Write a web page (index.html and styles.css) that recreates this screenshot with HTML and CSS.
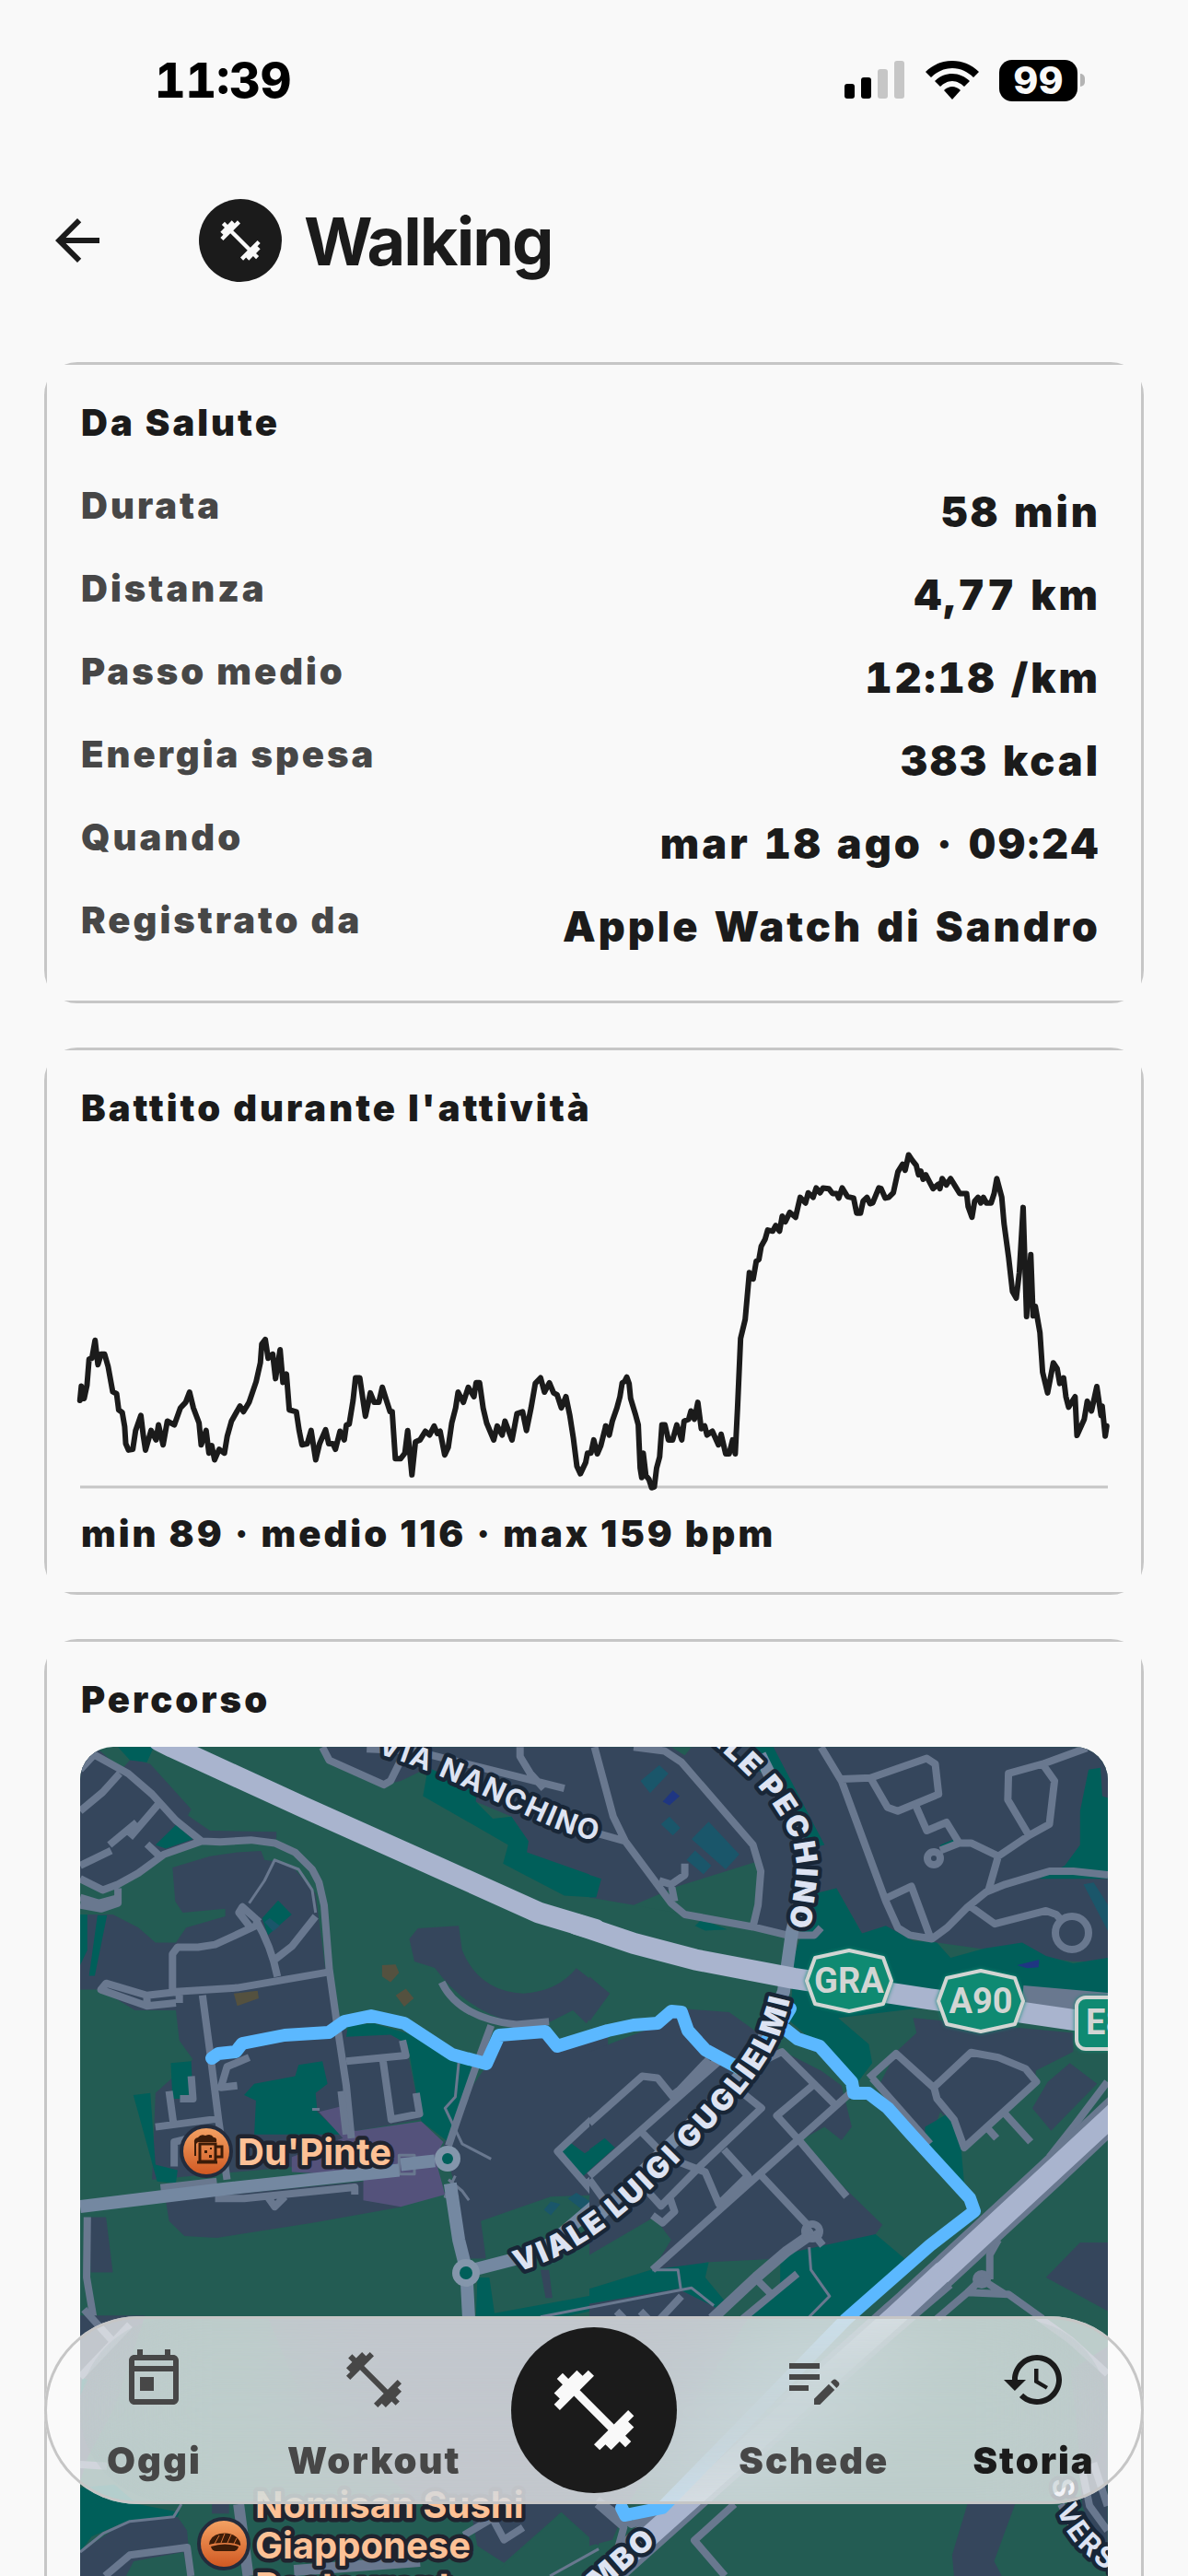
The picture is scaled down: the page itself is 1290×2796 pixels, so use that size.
FILE: index.html
```
<!DOCTYPE html>
<html lang="it">
<head>
    <meta charset="UTF-8">
    <meta name="viewport" content="width=device-width, initial-scale=1">
    <title>Walking</title>
    <link rel="stylesheet" href="styles.css">
</head>
<body>

    <!-- Shared icons -->
    <svg class="sprite" aria-hidden="true">
        <symbol id="dumbbell" viewBox="0 0 24 24">
            <path d="M20.57 14.86L22 13.43 20.57 12 17 15.57 8.43 7 12 3.43 10.57 2 9.14 3.43 7.71 2 5.57 4.14 4.14 2.71 2.71 4.14l1.43 1.43L2 7.71l1.43 1.43L2 10.57 3.43 12 7 8.43 15.57 17 12 20.57 13.43 22l1.43-1.43L16.29 22l2.14-2.14 1.43 1.43 1.43-1.43-1.43-1.43L22 16.29z"/>
        </symbol>
    </svg>

    <!-- Status bar -->
    <div class="status-bar">
        <span class="clock">11:39</span>
        <div class="status-icons">
            <svg class="signal" viewBox="0 0 66 42">
                <rect x="0" y="25" width="11" height="16" rx="3"/>
                <rect x="18" y="18" width="11" height="23" rx="3"/>
                <rect class="off" x="36" y="9" width="11" height="32" rx="3"/>
                <rect class="off" x="54" y="0" width="11" height="41" rx="3"/>
            </svg>
            <svg class="wifi" viewBox="0 0 58 42">
                <path d="M29 0C18 0 8 4 0 12l6 6c6-6 14-10 23-10s17 4 23 10l6-6C50 4 40 0 29 0z"/>
                <path d="M29 14c-7 0-14 3-19 8l6 6c3-3 8-6 13-6s10 3 13 6l6-6c-5-5-12-8-19-8z"/>
                <path d="M29 28c-3 0-7 2-9 4l9 10 9-10c-2-2-6-4-9-4z"/>
            </svg>
            <div class="battery"><span class="battery-level">99</span></div>
        </div>
    </div>

    <!-- Header -->
    <header class="header">
        <button class="back-btn" type="button" aria-label="Indietro">
            <svg viewBox="0 0 24 24"><path d="M20 11H7.83l5.59-5.59L12 4l-8 8 8 8 1.41-1.41L7.83 13H20v-2z"/></svg>
        </button>
        <span class="sport-icon"><svg><use href="#dumbbell"/></svg></span>
        <h1>Walking</h1>
    </header>

    <main class="content">
        <!-- Health data -->
        <section class="card">
            <div class="card-body">
                <h2>Da Salute</h2>
                <dl class="stats">
                    <div class="stat"><dt>Durata</dt><dd>58 min</dd></div>
                    <div class="stat"><dt>Distanza</dt><dd>4,77 km</dd></div>
                    <div class="stat"><dt>Passo medio</dt><dd>12:18 /km</dd></div>
                    <div class="stat"><dt>Energia spesa</dt><dd>383 kcal</dd></div>
                    <div class="stat"><dt>Quando</dt><dd>mar 18 ago · 09:24</dd></div>
                    <div class="stat"><dt>Registrato da</dt><dd>Apple Watch di Sandro</dd></div>
                </dl>
            </div>
        </section>

        <!-- Heart rate -->
        <section class="card">
            <div class="card-body">
                <h2>Battito durante l'attività</h2>
                <svg class="chart" viewBox="0 0 1116 360" preserveAspectRatio="none">
                    <line class="axis" x1="0" y1="360" x2="1116" y2="360"/>
                    <g transform="translate(-27 -134) scale(.3827 .4082)">
                        <polyline class="pulse" points="70,980 74,942 82,975 90,940 96,870 104,868 113,820 121,885 130,857 140,857 150,890 163,957 174,962 180,1005 190,1012 197,1050 200,1095 208,1112 220,1110 228,1060 243,1020 250,1075 256,1112 272,1060 286,1085 293,1045 306,1098 318,1035 338,1045 355,1000 370,985 381,958 392,1000 408,1040 414,1098 428,1060 436,1120 444,1100 452,1138 465,1110 480,1120 488,1075 500,1035 524,995 534,1010 550,985 570,930 582,880 586,830 596,818 604,868 617,857 625,922 638,845 646,932 656,910 664,1005 684,1010 692,1060 700,1098 715,1095 726,1060 739,1138 750,1095 767,1058 776,1095 788,1095 795,1110 808,1062 820,1085 826,1045 834,1043 845,980 852,920 864,920 880,1022 894,960 905,985 918,985 928,945 938,975 950,1010 956,1010 965,1135 980,1135 992,1120 1000,1060 1012,1178 1022,1090 1035,1085 1050,1062 1062,1072 1075,1048 1084,1068 1092,1062 1105,1125 1115,1105 1125,1040 1136,1000 1143,958 1158,985 1172,945 1188,970 1194,933 1204,933 1214,1000 1224,1040 1244,1085 1254,1048 1268,1072 1276,1035 1296,1085 1310,1015 1326,1010 1337,1060 1350,1000 1362,935 1377,920 1388,958 1402,933 1414,960 1424,965 1436,1000 1449,970 1460,1020 1470,1080 1480,1155 1490,1175 1505,1145 1510,1120 1520,1120 1528,1085 1538,1122 1548,1100 1562,1048"/>
                    </g>
                    <g transform="translate(553 -134) scale(.4146 .4082)">
                        <polyline class="pulse" points="43,1048 52,1072 60,1035 72,1000 80,970 86,933 92,930 98,918 104,935 108,975 120,1015 128,1045 133,1160 137,1185 141,1120 148,1180 156,1190 163,1212 170,1210 176,1160 184,1130 190,1045 198,1045 207,1085 218,1085 229,1045 242,1085 248,1035 260,1030 266,1008 275,1030 284,985 293,1055 302,1048 308,1072 322,1062 338,1098 345,1070 357,1122 366,1122 375,1085 382,1122 388,1000 396,815 408,765 419,640 429,657 437,610 444,605 450,570 460,552 467,527 480,530 488,515 498,530 505,490 513,505 525,480 540,493 552,440 566,455 573,428 586,440 594,415 604,428 612,415 627,417 637,430 648,430 653,442 662,415 676,438 692,442 700,482 710,482 717,450 727,440 735,457 742,455 758,415 764,417 775,442 784,440 796,428 808,372 820,352 827,368 836,327 846,342 856,355 862,380 868,370 874,392 881,380 900,417 914,405 918,417 924,390 935,407 946,390 958,410 970,430 988,430 992,465 1002,493 1009,450 1018,440 1025,455 1032,440 1040,455 1052,455 1060,430 1067,390 1080,440 1086,510 1098,600 1108,690 1118,708 1126,640 1136,467 1145,757 1156,592 1162,755 1168,730 1180,800 1187,905 1200,960 1215,880 1225,895 1232,935 1242,920 1248,970 1255,998 1272,970 1277,1073 1296,1030 1304,982 1315,1008 1329,943 1340,1020 1343,995 1351,1075 1355,1048"/>
                    </g>
                </svg>
                <p class="caption">min 89 · medio 116 · max 159 bpm</p>
            </div>
        </section>

        <!-- Route map -->
        <section class="card">
            <div class="card-body">
                <h2>Percorso</h2>
                <svg class="map" viewBox="0 0 1116 1116" preserveAspectRatio="xMidYMin slice">
                    <defs>
                        <linearGradient id="pin" x1="0" y1="0" x2="0" y2="1">
                            <stop offset="0" stop-color="#f5a465"/>
                            <stop offset="1" stop-color="#cf5620"/>
                        </linearGradient>
                        <path id="nanchino" d="M322 7 C380 24 430 50 487 76 S545 98 600 110"/>
                        <path id="pechino" d="M630 -50 C700 5 738 40 758 72 S780 125 776 150 S773 180 769 198"/>
                        <path id="guglielmi" d="M475 570 C532 552 577 523 636 464 S747 350 762 305 S774 250 777 220"/>
                        <path id="colombo" d="M450 1016 L628 862"/>
                        <path id="versi" d="M1056 795 C1058 850 1085 880 1150 915"/>
                    </defs>

                    <rect class="green" width="1116" height="1116"/>

                    <!-- north west -->
                    <g transform="translate(-7 -16) scale(.37 .4082)">
                        <path class="block" d="M19 40H65L140 100 380 290 270 325 140 405 85 420 19 395z M170 70L225 85 345 205 335 222 400 262 595 265 595 285 380 285 140 100z"/>
                        <path class="block" d="M290 360L400 330 480 320 550 316 560 340 600 345 640 355 710 430 740 640 775 790 950 805 980 850 1020 1030 830 1060 720 1150 230 1190 240 960 350 870 310 820 300 740 180 740 80 685 19 685 19 485 115 485 190 520 240 560 300 560 330 520 445 490 445 470 320 480 298 450z"/>
                        <path class="block" d="M730 40H1568V440H1530L1330 320 1285 225 1180 185 1040 95 960 130 910 140 750 75z M985 550L1010 522 1130 515 1140 580Q1190 690 1320 695 1420 690 1475 628L1535 670 1560 700 1505 775 1465 740 1400 770 1300 775Q1150 740 1060 627L1000 610z"/>
                        <path class="block" d="M1210 890L1270 790H1390L1420 840 1568 790V1230L1400 1235 1195 1300 1210 1400H1150L1130 1240 1085 1100 1140 980z M270 1245L850 1195 855 1245 965 1262 700 1305 420 1345 325 1340 280 1300z M45 1290H95L115 1437H50z M1370 1430h25l10 75h-20z"/>
                        <path class="park" d="M130 40H235L215 80 165 75z M240 300L300 247 350 285 270 310z M19 485H40V580L19 620z M70 487H98L62 648H45z M600 448L640 485 570 540 553 495z M530 935L650 915 660 885 730 875 745 935 710 960 715 1010 785 1070H530L535 980 500 965z M285 880L345 875 350 975H290z M175 965L225 960 240 1150 305 1165 300 1200 245 1195z M805 780L880 775 975 800 1040 830 1190 890 1100 1090 1020 1035 980 830 930 805 800 810z M1185 1450H1220L1235 1545 1568 1490V1530L1370 1568H1180z M1040 95L1185 150 1180 185 1230 230 1285 225 1335 290 1330 320 1550 390 1530 440 1440 435 1260 350 1275 300 1025 170z M1430 1110L1455 1090 1500 1120 1568 1080V1120L1490 1185z"/>
                        <path class="mall" d="M720 1010L785 995 800 1060 830 1060 1020 1035 1085 1090 1060 1130 1090 1230 960 1262 850 1245V1180L640 1170V1130L790 1080z"/>
                        <path class="court" d="M905 620L945 618 955 640 930 665 905 650z M945 700L975 682 998 708 970 730z M470 695L540 688 543 708 480 728z"/>
                        <path class="pool" d="M560 505L575 495 605 515 585 530z M1380 1270L1400 1248 1428 1255 1400 1285z M1450 1240L1475 1225 1520 1250 1500 1275z"/>
                        <path class="road" d="M60 60L160 110 230 165 300 235 375 290 430 292 520 287 590 295 650 320 700 365 720 400 735 460 750 630 775 790 800 940 815 1080 M375 290L265 325 190 375 130 405 85 420 19 390 M19 100L65 55 M135 110L85 160 19 210 M250 190L165 280 M185 240L105 300 M19 355L110 315 M215 298L255 332 M19 440L75 455 135 440 M130 415V455L80 470 19 460"/>
                        <path class="road" d="M290 690V590L305 572H365L415 565 535 515 M545 505L495 465 485 480 515 515 M535 500Q580 570 598 650 M710 490L640 570 590 605 M300 690L480 680 750 638 M300 720L215 728 80 685 95 668 215 700 310 690V720 M215 700V728 M378 700L400 850 425 1030 450 1190 M240 1050L425 1028 M280 955L292 1035 M345 915L350 975H312 M515 865L450 890 432 945 480 940 M800 875L975 860 965 820 M908 875L932 1030 1015 1015 1005 960 M785 955L800 1070"/>
                        <path class="road" d="M730 40L750 75 910 140 930 130 960 75 M860 45L1000 50 1440 150 M1310 40V65L1340 110 1380 150 M1530 40L1568 200 M1540 270L1568 280 M1225 780L1180 890 1130 1020 1100 1100 M1080 665Q1130 760 1300 778L1395 770 M295 1155V1090L340 1080 M255 1212L420 1195 M415 1240H500L825 1210V1230 M565 1230L590 1262 620 1235 M40 1290L38 1450 60 1568 M1568 990L1420 1115 1568 1270 M1510 1185L1560 1240"/>
                        <path class="road thin" d="M515 455L560 395 590 340 660 365 700 420 710 480 M1130 880L1120 970 1090 1000 1140 1095 1225 1135 M955 1125h45v50h-45z M1100 1190L1140 1220 1160 1245 M1120 1180L1090 1235H1130 M1370 1555L1568 1520 M700 1003H722"/>
                        <path class="avenue" d="M19 1262L440 1215 955 1165 M960 1150L1060 1140 M1105 1200L1130 1350 1152 1430 1160 1568 M1150 1435L1300 1400 1400 1360 1568 1230"/>
                        <path class="motorway" d="M250 22L290 40 675 200 1070 360 1365 480 1530 525"/>
                    </g>

                    <!-- north east -->
                    <g transform="translate(553 -16) scale(.37 .4082)">
                        <path class="block" d="M0 40H1522V610H1420L1020 560 950 550 800 535 725 415 660 430 590 540 480 515 280 485 240 455 130 460 0 440z"/>
                        <path class="green" d="M130 460L260 410 490 345 500 370 480 510 280 485z M240 40H300L280 62z"/>
                        <path class="park" d="M480 40H540L690 300 640 310Q600 170 480 90z M660 430L725 415 800 535 870 515 950 555 1020 560 1060 600 1160 575 1270 560 1340 595 1420 615 1522 600V740L960 735 730 760 820 830 830 880 780 940 680 840 590 770 600 600z M1465 100L1500 95 1505 170 1522 175V390H1320L1395 355 1440 300V210z M0 380L35 390 20 440H0z M310 515L330 498 405 525 340 528z"/>
                        <path class="block" d="M0 850L200 780 270 735 410 745 480 790 560 845 680 900 740 940 770 1050 740 1085 690 1050 620 1085 690 1160 860 1310 820 1360 720 1375 560 1400 340 1410V1450L380 1560 0 1568z M0 650L60 695 0 770z"/>
                        <path class="block" d="M900 850L960 800 950 760 1420 800V850L1310 900V930L1100 1105 1080 1060 1030 1010 1000 1080 850 940z M1345 930L1410 880 1490 935 1355 1060 1300 1000z M1522 1357V1540L1340 1450 1440 1357z"/>
                        <path class="green" d="M0 1390L190 1290 240 1350 180 1440 0 1480z"/>
                        <path class="park" d="M180 1430L350 1410 340 1450 395 1510 370 1530 260 1480 0 1520V1480z M560 1390L840 1335 925 1400 740 1560H440L560 1480z M0 1110L45 1080 75 1105 0 1165z M985 1050L1045 1018 1085 1050 1100 1200 1060 1190 985 1100z M1030 300L1070 285 1080 300 1030 312z"/>
                        <path class="pool" d="M150 130L205 88 232 110 178 162z M300 285L350 238 440 325 400 365z M285 340L310 315 358 355 335 378z M210 245L235 225 267 255 245 275z M1450 405L1480 400 1522 460V530z"/>
                        <path class="deep" d="M215 185L245 155 265 170 235 195z M1255 620L1320 605 1318 625 1285 628z"/>
                        <path class="road" d="M15 40L70 225 105 290 240 455 280 485 480 518 580 540H660L680 520 M25 270L105 290 M130 40L220 50 270 80 480 300 503 370 495 460 480 518 M205 395L240 405 250 450 M240 405L280 380V350 M680 40L740 130 870 450 905 520 940 540 1005 550 1050 520 1110 465 1165 425 1220 405 1350 370H1420L1522 380 M740 125L825 122 990 70 1015 85 1025 165 905 210 875 200 825 122 M960 200L990 262 1048 240 1085 295 1030 315 M1085 295H1120L1200 330 1170 425 M1200 330L1290 275 1350 245 1365 130 1330 85 1230 110 1228 180 1290 275 M1330 85L1460 42 M875 440L945 410 1000 545 M1120 465L1190 510 1340 475 1370 485 1390 505"/>
                        <path class="road" d="M820 920L900 855 1010 945 1120 852 1200 865 1280 895 1312 930 1100 1105 1070 1030 1020 975 1010 940 M1220 1015L1295 1090 M1170 1055L1195 1080 M830 920L1000 1095 M0 1040L155 915 200 920 245 970 350 870 M245 965L380 870 M0 1180L400 860 M520 870L565 850 720 990 M655 940L550 1020 615 1085 755 1235 M185 1430L790 940 M500 1175L650 1320 M450 960L505 1000 330 1150 210 1260 150 1200 M155 1065L225 1130 340 1170 380 1255 465 1180 395 1110 M0 1190L40 1240 M185 1285L215 1305 250 1275 235 1235 M200 1568L270 1500 M80 1540L110 1568 M150 1540L180 1568 M450 1560L610 1440 M490 1455L540 1500 M655 1330L685 1365 M1520 930L1420 1050 1350 1130"/>
                        <path class="road" d="M1020 1560L1110 1490 1230 1495 1330 1560 M1110 1490L1150 1455 1220 1495 M1175 1455V1390L1200 1350"/>
                        <path class="road wide" d="M360 1560L490 1450 580 1380 660 1330"/>
                        <path class="road thin" d="M185 1430L260 1430 268 1480 M0 1530L300 1478 365 1525 M645 1370L650 1430 705 1500 645 1555"/>
                        <path class="avenue" d="M500 60L560 170 620 300 625 420 595 530 570 690 480 880 200 1130 0 1310"/>
                        <path class="service" d="M1560 995L1350 1175 890 1560 M1270 715L1522 735"/>
                        <path class="motorway" d="M-38 511L0 522 130 562 310 605 600 655 1000 710 1420 765 1560 782 M1560 998L890 1560"/>
                    </g>

                    <!-- south -->
                    <g transform="translate(-87 584) scale(.4146 .3333)">
                        <path class="block" d="M210 100H380L300 400 230 560 210 640z M700 102H1568V714H1100L800 400z M210 870L330 770 465 755 490 800 500 948H210z M1230 714H1568V850L1470 740 1320 905 1250 850z M555 714H600V745H555z"/>
                        <path class="park" d="M210 660L300 650 360 714 470 740 465 755 330 770 240 820 210 870z M215 300L230 310 210 360z"/>
                        <path class="green" d="M350 900L480 870 495 948H330z M1470 740L1568 860V948H1290z"/>
                        <path class="road" d="M275 948L340 880 490 855 500 948 M1215 815L1290 760 1320 830 1370 790 M220 80L300 190 M210 300L340 130 M210 585L280 590"/>
                        <path class="road thin" d="M210 870L270 810 340 770 455 755 475 714 M1440 948L1568 860"/>
                        <path class="road wide" d="M625 714L650 948 M770 930L1100 900"/>
                    </g>
                    <g transform="translate(553 584) scale(.4146 .3333)">
                        <path class="block" d="M0 102H420L100 714 60 830 0 850z M990 714H1115L1060 900 1080 948H955L950 880z M1260 280L1357 200V948L1290 714 1280 500z"/>
                        <path class="road" d="M380 714L275 832 355 948 M20 714L90 790 70 880 0 948 M20 700L110 780 180 750 M1170 100L1260 180 1357 290 M1235 714L1290 850 M1290 600L1310 720 1357 800 M1320 580L1357 720"/>
                        <path class="service" d="M925 -30L800 102 250 714 40 948"/>
                        <path class="motorway" d="M925 -42L800 102 250 714 40 948"/>
                    </g>

                    <!-- roundabouts -->
                    <circle class="ring" cx="1077" cy="202" r="18"/>
                    <circle class="ring" cx="927" cy="121" r="7"/>
                    <circle class="ring" cx="795" cy="526" r="8"/>
                    <circle class="ring" cx="979" cy="578" r="6"/>
                    <circle class="plaza" cx="419" cy="571" r="15"/>
                    <circle class="park" cx="419" cy="571" r="7"/>
                    <circle class="plaza" cx="399" cy="447" r="14"/>
                    <circle class="park" cx="399" cy="447" r="6"/>

                    <!-- walked route -->
                    <polyline class="route" points="143,338 150,333 169,331 176,322 222,313 270,310 287,298 316,292 352,300 404,334 441,344 455,313 505,309 518,325 573,308 601,302 627,300 642,287 653,288 660,308 679,329 716,349 734,331 753,311 771,284 760,302 779,317 803,325 838,364 840,376 856,376 877,392 901,419 966,490 971,504 923,541 832,621 632,826 592,834 588,826"/>

                    <!-- street names -->
                    <g class="street">
                        <text class="light"><textPath href="#nanchino">VIA NANCHINO</textPath></text>
                        <text text-anchor="end"><textPath href="#pechino" startOffset="100%">VIALE PECHINO</textPath></text>
                        <text><textPath href="#guglielmi">VIALE LUIGI GUGLIELMI</textPath></text>
                        <text text-anchor="end"><textPath href="#colombo" startOffset="100%">COLOMBO</textPath></text>
                        <text class="light"><textPath href="#versi">S VERSI</textPath></text>
                    </g>

                    <!-- road shields -->
                    <g class="shield">
                        <path d="M798 229L835 221 872 229 881 254 872 279 835 287 798 279 789 254z"/>
                        <text x="835" y="267" text-anchor="middle">GRA</text>
                        <path d="M941 251L978 243 1015 251 1024 276 1015 301 978 309 941 301 932 276z"/>
                        <text x="978" y="289" text-anchor="middle">A90</text>
                        <rect x="1082" y="272" width="92" height="56" rx="10"/>
                        <text x="1092" y="312">E80</text>
                    </g>

                    <!-- places -->
                    <g class="place">
                        <circle class="pin" cx="137" cy="439" r="27"/>
                        <g class="pin-icon">
                            <path d="M130 431h17v19h-17z M148 434h6v11h-6 M127 451h22"/>
                            <path class="solid" d="M124 444V430q-1-5 4-6q3-4 8-2q6-3 9 2q4 0 3 5h-20l-2 2v13z"/>
                            <path class="dot" d="M135 438h3v3h-3z M141 435h2v2h-2z M140 443h3v3h-3z"/>
                        </g>
                        <text x="171" y="454">Du'Pinte</text>
                        <circle class="pin" cx="156" cy="865" r="27"/>
                        <g class="pin-icon">
                            <path class="solid" d="M140 866q1-10 12-12q12-2 19 5q4 4 3 8q-5-3-17-3t-17 2z M142 868q15-5 30 0q-1 5-6 5h-18q-5 0-6-5z"/>
                            <path class="cut" d="M146 865l5-9 M153 864l4-10 M160 864l4-9 M167 865l3-6"/>
                        </g>
                        <text x="190" y="837">Nomisan Sushi</text>
                        <text x="190" y="881">Giapponese</text>
                        <text x="190" y="925">Restaurant</text>
                    </g>
                </svg>
            </div>
        </section>
    </main>

    <!-- Bottom navigation -->
    <nav class="tab-bar">
        <a class="tab" href="#oggi">
            <svg viewBox="0 0 24 24"><path d="M19 3h-1V1h-2v2H8V1H6v2H5c-1.11 0-1.99.9-1.99 2L3 19c0 1.1.89 2 2 2h14c1.1 0 2-.9 2-2V5c0-1.1-.9-2-2-2zm0 16H5V9h14v10zm0-12H5V5h14v2zM7 11h5v5H7z"/></svg>
            <span>Oggi</span>
        </a>
        <a class="tab" href="#workout">
            <svg><use href="#dumbbell"/></svg>
            <span>Workout</span>
        </a>
        <button class="start-btn" type="button" aria-label="Inizia">
            <svg><use href="#dumbbell"/></svg>
        </button>
        <a class="tab" href="#schede">
            <svg viewBox="0 0 24 24"><path d="M3 10h11v2H3v-2zm0-2h11V6H3v2zm0 8h7v-2H3v2zm15.01-3.13l.71-.71c.39-.39 1.02-.39 1.41 0l.71.71c.39.39.39 1.02 0 1.41l-.71.71-2.12-2.12zm-.71.71l-5.3 5.3V21h2.12l5.3-5.3-2.12-2.12z"/></svg>
            <span>Schede</span>
        </a>
        <a class="tab active" href="#storia">
            <svg viewBox="0 0 24 24"><path d="M13 3c-4.97 0-9 4.03-9 9H1l3.89 3.89.07.14L9 12H6c0-3.87 3.13-7 7-7s7 3.13 7 7-3.13 7-7 7c-1.93 0-3.68-.79-4.94-2.06l-1.42 1.42C8.27 19.99 10.51 21 13 21c4.97 0 9-4.03 9-9s-4.03-9-9-9zm-1 5v5l4.28 2.54.72-1.21-3.5-2.08V8H12z"/></svg>
            <span>Storia</span>
        </a>
    </nav>

</body>
</html>
```
FILE: styles.css
```
/* General Styling */
* {
    box-sizing: border-box;
}

body {
    font-family: Inter, "Liberation Sans", sans-serif;
    background: #f9f9f9;
    color: #1b1b1b;
    height: 100vh;
    margin: 0;
    overflow: hidden;
}

h1, h2, p, dl, dd {
    margin: 0;
}

button {
    border: none;
    padding: 0;
    background: none;
    color: inherit;
    cursor: pointer;
}

svg {
    display: block;
    fill: currentColor;
}

.sprite {
    position: absolute;
    width: 0;
    height: 0;
}

/* Status bar */
.status-bar {
    display: flex;
    align-items: center;
    justify-content: space-between;
    height: 174px;
    padding: 0 112px 0 168px;
    color: #000;
}

.clock {
    font-size: 52px;
    font-weight: 800;
    font-variant-numeric: tabular-nums;
}

.status-icons {
    display: flex;
    align-items: center;
    gap: 22px;
}

.signal {
    width: 66px;
    height: 42px;
}

.signal .off {
    fill: #c6c6c6;
}

.wifi {
    width: 58px;
    height: 42px;
}

.battery {
    display: flex;
    align-items: center;
    gap: 3px;
}

.battery::after {
    content: "";
    width: 5px;
    height: 14px;
    border-radius: 0 5px 5px 0;
    background: #b4b4b4;
}

.battery-level {
    width: 85px;
    border-radius: 14px;
    background: #000;
    color: #f9f9f9;
    font-size: 41px;
    font-weight: 800;
    line-height: 45px;
    text-align: center;
}

/* Header */
.header {
    display: flex;
    align-items: center;
    height: 174px;
    padding: 0 48px;
}

.back-btn {
    margin-right: 96px;
}

.back-btn svg {
    width: 72px;
    height: 72px;
}

.sport-icon {
    display: grid;
    place-items: center;
    width: 90px;
    height: 90px;
    margin-right: 24px;
    border-radius: 50%;
    background: #1b1b1b;
    color: #f9f9f9;
}

.sport-icon svg {
    width: 52px;
    height: 52px;
}

h1 {
    font-size: 72px;
    font-weight: 700;
    letter-spacing: -2px;
}

/* Cards */
.content {
    display: flex;
    flex-direction: column;
    gap: 48px;
    padding: 45px 48px 0;
}

.card {
    border: 3px solid #c6c6c6;
    border-radius: 36px;
}

.card-body {
    padding: 36px;
    background: #f9f9f9;
}

h2, .caption, .stat dt {
    padding-left: 1px;
    font-size: 40px;
    font-weight: 900;
    line-height: 54px;
    letter-spacing: 3px;
}

h2 {
    margin-bottom: 24px;
}

.stat {
    display: flex;
    justify-content: space-between;
    padding: 12px 8px 10px 0;
}

.stat dt {
    color: #474747;
}

.stat dd {
    font-size: 45px;
    font-weight: 900;
    font-variant-numeric: tabular-nums;
    line-height: 68px;
    letter-spacing: 3px;
}

/* Heart rate chart */
.chart {
    width: 100%;
    height: 360px;
    overflow: visible;
}

.axis {
    stroke: #c6c6c6;
    stroke-width: 3;
}

.pulse {
    fill: none;
    stroke: #1b1b1b;
    stroke-width: 6;
    stroke-linecap: round;
    stroke-linejoin: round;
    vector-effect: non-scaling-stroke;
}

.caption {
    margin-top: 24px;
}

/* Map */
.map {
    width: 100%;
    aspect-ratio: 1;
    border-radius: 36px;
}

.green { fill: #235c53; }
.block { fill: #35465c; }
.park { fill: #005f5a; }
.mall { fill: #54527b; }
.court { fill: #54513f; }
.pool { fill: #1a566a; }
.deep { fill: #1f3682; }

.road, .avenue, .motorway, .service, .ring {
    fill: none;
    stroke: #69788f;
    stroke-width: 8;
    stroke-linejoin: round;
    vector-effect: non-scaling-stroke;
}

.road.thin {
    stroke-width: 3;
}

.road.wide {
    stroke-width: 12;
}

.avenue {
    stroke: #7488a1;
    stroke-width: 14;
}

.service {
    stroke-width: 34;
}

.motorway {
    stroke: #a9b4ce;
    stroke-width: 23;
    stroke-linecap: round;
}

.plaza {
    fill: #8496ab;
}

.route {
    fill: none;
    stroke: #5bb8ff;
    stroke-width: 14;
    stroke-linecap: round;
    stroke-linejoin: round;
}

.street text {
    fill: #dde3f2;
    stroke: #182637;
    stroke-width: 9;
    stroke-linejoin: round;
    paint-order: stroke;
    font-size: 32px;
    font-weight: 900;
    letter-spacing: 3px;
}

.street .light {
    font-size: 31px;
    font-weight: 700;
    letter-spacing: 2px;
}

.shield path, .shield rect {
    fill: #0f8a72;
    stroke: #d2d5d3;
    stroke-width: 4;
    stroke-linejoin: round;
    filter: drop-shadow(0 0 2px #0f8a72);
}

.shield text {
    fill: #d2d5d3;
    font-family: Roboto, Inter, sans-serif;
    font-size: 38px;
    font-weight: 700;
}

.pin {
    fill: url(#pin);
    stroke: #232c3d;
    stroke-width: 4;
}

.pin-icon path {
    fill: none;
    stroke: #3d1c08;
    stroke-width: 3;
}

.pin-icon .solid, .pin-icon .dot {
    fill: #3d1c08;
    stroke: none;
}

.pin-icon .cut {
    stroke: #dc7538;
    stroke-width: 1;
}

.place text {
    fill: #fdc196;
    stroke: #20242f;
    stroke-width: 9;
    stroke-linejoin: round;
    paint-order: stroke;
    font-size: 40px;
    font-weight: 700;
}

/* Bottom navigation */
.tab-bar {
    position: fixed;
    left: 48px;
    right: 48px;
    bottom: 78px;
    display: grid;
    grid-template-columns: repeat(5, 1fr);
    justify-items: center;
    height: 204px;
    border-radius: 102px;
    background: rgba(249, 249, 249, 0.72);
    box-shadow: inset 0 0 0 3px #c6c6c6;
}

/* frosted glass over the map only */
.tab-bar::before {
    content: "";
    position: absolute;
    inset: 3px 39px;
    z-index: -1;
    border-radius: 99px;
    backdrop-filter: blur(60px);
}

.tab {
    display: flex;
    flex-direction: column;
    align-items: center;
    gap: 28px;
    padding-top: 33px;
    color: #474747;
    font-size: 40px;
    font-weight: 900;
    line-height: 48px;
    letter-spacing: 2px;
    text-decoration: none;
}

.tab.active {
    color: #1b1b1b;
}

.tab svg {
    width: 72px;
    height: 72px;
}

.start-btn {
    display: grid;
    place-items: center;
    align-self: center;
    width: 180px;
    height: 180px;
    border-radius: 50%;
    background: #1b1b1b;
    color: #f9f9f9;
}

.start-btn svg {
    width: 104px;
    height: 104px;
}
```
